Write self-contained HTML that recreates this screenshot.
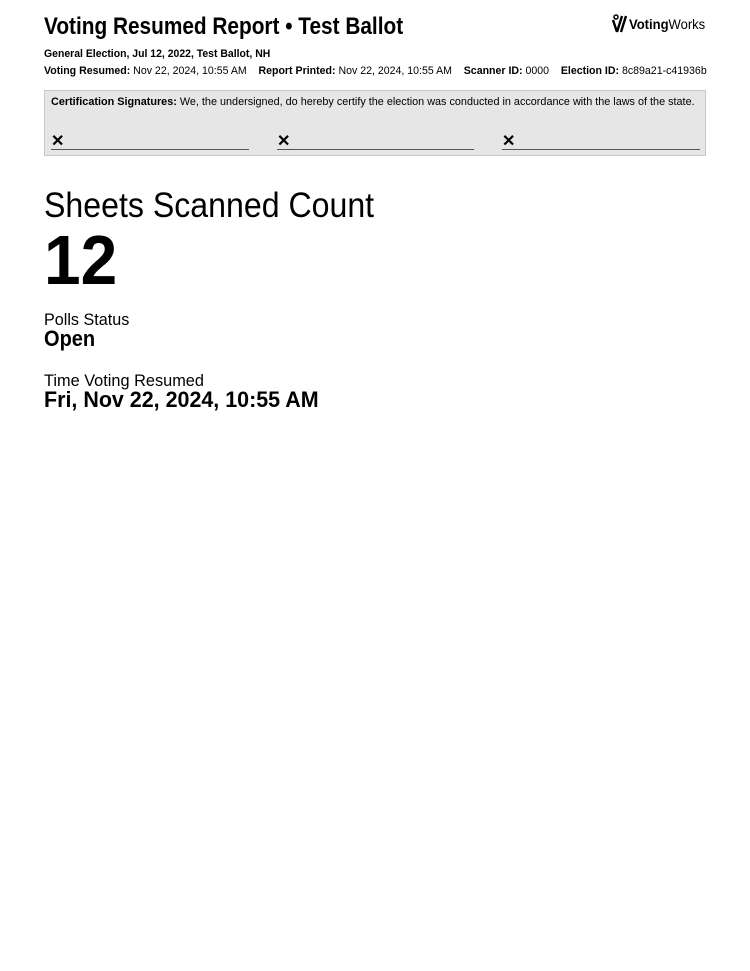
<!DOCTYPE html>
<html><head><meta charset="utf-8"><style>
*{margin:0;padding:0;box-sizing:border-box}
body{width:750px;height:971px;background:#fff;font-family:"Liberation Sans",sans-serif;color:#000;position:relative;overflow:hidden}
.a{position:absolute;white-space:nowrap;transform-origin:0 0}
b{font-weight:bold}
</style></head><body>
<div class="a" style="left:44px;top:13px;font-size:24px;font-weight:bold;transform:scaleX(0.867)">Voting Resumed Report • Test Ballot</div>
<div class="a" style="left:611px;top:14px;display:flex;align-items:center">
<svg width="17" height="20" viewBox="0 0 17 20"><path d="M2 6 L6 18 M6 18 L11 2 M10 18 L15 2" stroke="#000" stroke-width="2.4" fill="none"/><circle cx="5" cy="3" r="2" stroke="#000" stroke-width="1.5" fill="none"/></svg>
<span style="font-size:14px;display:inline-block;margin-left:1px;transform:scaleX(0.93);transform-origin:0 0"><b>Voting</b>Works</span></div>
<div class="a" style="left:44px;top:48px;font-size:11px;font-weight:bold;transform:scaleX(0.95)">General Election, Jul 12, 2022, Test Ballot, NH</div>
<div class="a" style="left:44px;top:65px;font-size:11px;transform:scaleX(0.962)"><b>Voting Resumed:</b> Nov 22, 2024, 10:55 AM &nbsp;&nbsp; <b>Report Printed:</b> Nov 22, 2024, 10:55 AM &nbsp;&nbsp; <b>Scanner ID:</b> 0000 &nbsp;&nbsp; <b>Election ID:</b> 8c89a21-c41936b</div>
<div class="a" style="left:44px;top:90px;width:662px;height:66px;background:#e6e6e6;border:1px solid #c8c8c8"></div>
<div class="a" style="left:51px;top:96px;font-size:11px;transform:scaleX(0.985)"><b>Certification Signatures:</b> We, the undersigned, do hereby certify the election was conducted in accordance with the laws of the state.</div>
<div class="a" style="left:51px;top:134px;width:198px;height:16px;border-bottom:1px solid #555;font-size:16px;font-weight:bold;line-height:16px">✕</div>
<div class="a" style="left:277px;top:134px;width:197px;height:16px;border-bottom:1px solid #555;font-size:16px;font-weight:bold;line-height:16px">✕</div>
<div class="a" style="left:502px;top:134px;width:198px;height:16px;border-bottom:1px solid #555;font-size:16px;font-weight:bold;line-height:16px">✕</div>
<div class="a" style="left:44px;top:186px;font-size:35px;transform:scaleX(0.917)">Sheets Scanned Count</div>
<div class="a" style="left:44px;top:220px;font-size:70px;font-weight:bold;transform:scaleX(0.94)">12</div>
<div class="a" style="left:44px;top:310px;font-size:17px;transform:scaleX(0.95)">Polls Status</div>
<div class="a" style="left:44px;top:326px;font-size:22px;font-weight:bold;transform:scaleX(0.91)">Open</div>
<div class="a" style="left:44px;top:371px;font-size:17px;transform:scaleX(0.96)">Time Voting Resumed</div>
<div class="a" style="left:44px;top:387px;font-size:22px;font-weight:bold;transform:scaleX(0.975)">Fri, Nov 22, 2024, 10:55 AM</div>
</body></html>
